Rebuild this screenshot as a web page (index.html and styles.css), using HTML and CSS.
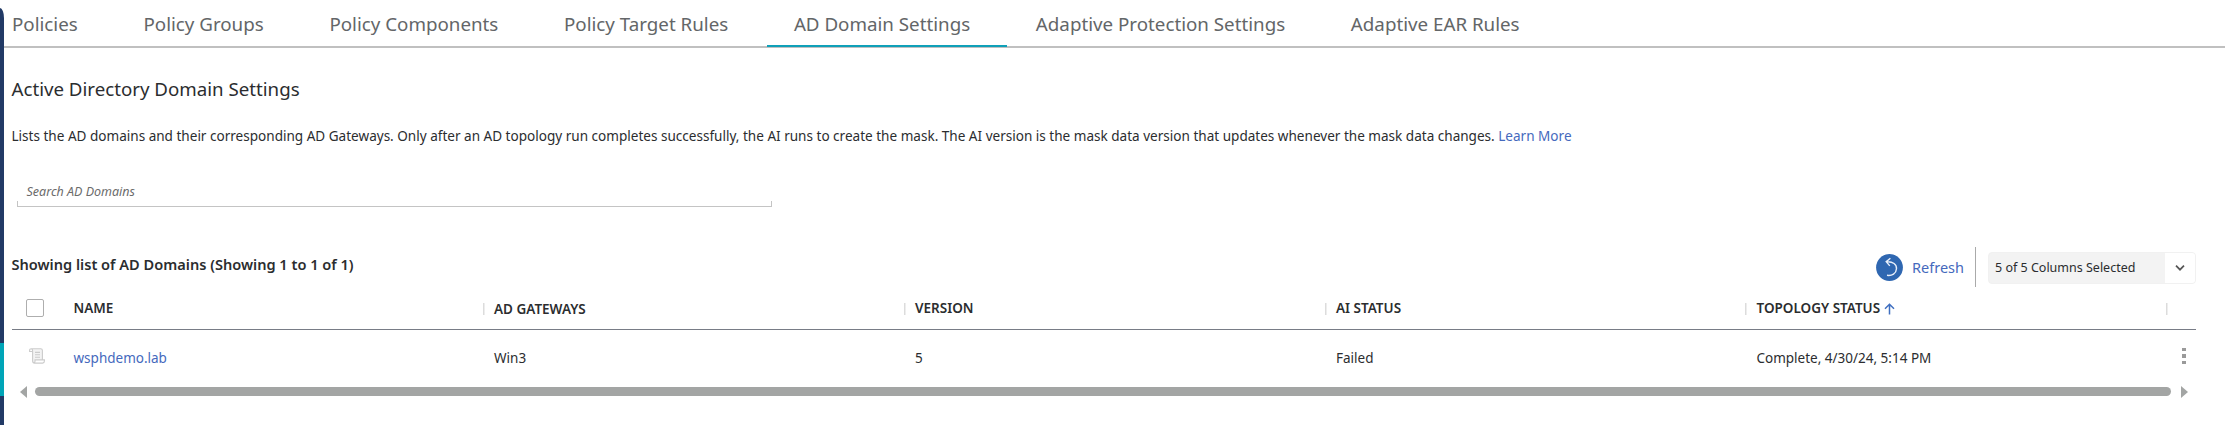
FILE: index.html
```html
<!DOCTYPE html>
<html lang="en">
<head>
<meta charset="utf-8">
<title>AD Domain Settings</title>
<link rel="stylesheet" href="styles.css">
</head>
<body>
<div class="app">
  <aside class="rail"><span class="rail-top"></span><span class="rail-active"></span><span class="rail-bottom"></span></aside>
  <main class="main">
    <nav class="tabs">
      <a class="tab">Policies</a>
      <a class="tab">Policy Groups</a>
      <a class="tab">Policy Components</a>
      <a class="tab">Policy Target Rules</a>
      <a class="tab tab-active">AD Domain Settings</a>
      <a class="tab">Adaptive Protection Settings</a>
      <a class="tab">Adaptive EAR Rules</a>
    </nav>
    <section class="content">
      <h1 class="title">Active Directory Domain Settings</h1>
      <p class="desc">Lists the AD domains and their corresponding AD Gateways. Only after an AD topology run completes successfully, the AI runs to create the mask. The AI version is the mask data version that updates whenever the mask data changes. <a class="link">Learn More</a></p>
      <div class="search"><span class="search-text">Search AD Domains</span><span class="search-edge"></span></div>
      <div class="toolbar">
        <h2 class="count">Showing list of AD Domains (Showing 1 to 1 of 1)</h2>
        <div class="actions">
          <svg class="refresh-icon" viewBox="0 0 27 27"><circle cx="13.5" cy="13.5" r="13.4" fill="#2f67b1"/><path d="M10.600 7.800C17 7.300 20.800 10.600 20.500 14.800C20.200 19.600 16 22 11 21.300M14.400 4.300l-4.200 3.400 3.600 4.200" fill="none" stroke="#e8effa" stroke-width="1.400"/></svg>
          <a class="refresh">Refresh</a>
          <span class="divider"></span>
          <div class="select"><span class="select-text">5 of 5 Columns Selected</span><span class="select-arrow"><svg width="10" height="8" viewBox="0 0 10 8"><path d="M1 1.700l4 4 4-4" fill="none" stroke="#555" stroke-width="1.700"/></svg></span></div>
        </div>
      </div>
      <div class="row head">
        <span class="check-cell"><span class="checkbox"></span></span>
        <span class="cell">NAME</span>
        <span class="cell sep low">AD GATEWAYS</span>
        <span class="cell sep">VERSION</span>
        <span class="cell sep">AI STATUS</span>
        <span class="cell sep">TOPOLOGY STATUS<svg class="sort" width="11" height="12" viewBox="0 0 11 12"><path d="M5.500 11.500V1.500M1 5.800l4.500-4.500 4.500 4.500" fill="none" stroke="#3f6fc0" stroke-width="1.500"/></svg></span>
        <span class="cell sep end"></span>
      </div>
      <div class="row body-row">
        <span class="check-cell"><svg class="doc" width="16" height="16" viewBox="0 0 16 16"><path d="M2.300.8h9.400q1.700 0 1.700 1.700v9.200H6v1.500q0 1.700-1.200 1.700t-1.200-2V3.500z" fill="#f3f3f3"/><path d="M2.300.8h9.400q1.700 0 1.700 1.700v9M2.300.8Q.6.8.6 2.500v1h3v9.600q0 2 2 2h8q1.800 0 1.800-2v-1.200H6v1.300q0 1.900-1.200 1.900M3.600 3.500q0-2.700-1.300-2.700M6 4.400h5M6 6.800h5M6 9.200h5" fill="none" stroke="#cbcbcb" stroke-width="1.100"/></svg></span>
        <span class="cell"><a class="link">wsphdemo.lab</a></span>
        <span class="cell">Win3</span>
        <span class="cell">5</span>
        <span class="cell">Failed</span>
        <span class="cell">Complete, 4/30/24, 5:14 PM</span>
        <span class="cell kebab"><i class="dot"></i><i class="dot"></i><i class="dot"></i></span>
      </div>
      <div class="scroll"><span class="arrow-left"></span><span class="thumb"></span><span class="arrow-right"></span></div>
    </section>
  </main>
</div>
</body>
</html>
```
FILE: styles.css
```css
* { box-sizing: border-box; }
body { margin: 0; background: #fff; font-family: "Noto Sans", sans-serif; color: #2b2d2f; }
.app { display: flex; width: 2225px; height: 425px; overflow: hidden; }
.rail { display: flex; flex-direction: column; flex: 0 0 4px; padding-top: 8px; }
.rail-top { flex: 0 0 335px; background: #223a66; border-top-right-radius: 4px 10px; }
.rail-active { flex: 0 0 53px; background: #00a5b8; }
.rail-bottom { flex: 1; background: #223a66; }
.main { flex: 1; min-width: 0; }
.tabs { display: flex; gap: 1.700px; height: 48px; border-bottom: 2px solid #c0c0c0; padding-left: 8px; }
.tab { height: 47px; padding: 0 37px 0 27px; line-height: 47px; font-size: 18.750px; color: #636668; white-space: nowrap; }
.tab:first-child { padding-left: 0; }
.tab-active { border-bottom: 2px solid #0fa0b8; }
.content { padding: 0 29px 0 7.500px; }
.title { margin: 28px 0 0; height: 26px; line-height: 26px; font-size: 18.700px; font-weight: 400; }
.desc { margin: 24px 0 0; height: 20px; line-height: 20px; font-size: 13.550px; white-space: nowrap; }
.link { color: #4569bd; }
.search { display: flex; flex-direction: column; justify-content: space-between; width: 755px; height: 24px; margin: 37px 0 0 5px; }
.search-text { padding-left: 10px; line-height: 18px; font-size: 12.500px; font-style: italic; color: #6b6b6b; }
.search-edge { height: 6px; border: 1px solid #c4c4c4; border-top: 0; }
.toolbar { display: flex; justify-content: space-between; height: 40px; margin-top: 40px; }
.count { margin: 5.500px 0 0; line-height: 22px; font-size: 14.580px; font-weight: 600; }
.actions { display: flex; align-items: center; }
.refresh-icon { width: 27px; height: 27px; }
.refresh { margin-left: 9px; line-height: 22px; font-size: 14.500px; color: #4569bd; }
.divider { width: 1.500px; height: 40px; margin: 0 12px 0 10.500px; background: #aaa; }
.select { display: flex; width: 208px; height: 32px; margin-top: 2px; border: 1px solid #f1f1f1; border-radius: 4px; background: #f3f3f3; overflow: hidden; }
.select-text { flex: 1; padding-left: 6px; line-height: 30px; font-size: 12.500px; }
.select-arrow { display: flex; align-items: center; justify-content: center; width: 30px; background: #fff; }
.row { display: grid; grid-template-columns: 62px 420.500px 421px 421px 420.500px 421px 1fr; }
.head { height: 42.500px; border-bottom: 1px solid #787c86; font-size: 13.500px; font-weight: 600; }
.check-cell { padding-left: 14.500px; }
.checkbox { display: block; width: 18px; height: 18px; margin-top: 12px; border: 1.500px solid #aeaeae; border-radius: 2px; }
.cell { white-space: nowrap; line-height: 20px; }
.head .cell { padding-top: 10.500px; }
.head .low { padding-top: 11.500px; }
.sep { background: linear-gradient(#dcdcdc, #dcdcdc) no-repeat 0 16px / 1.500px 12px; margin-left: -11.500px; padding-left: 11.500px; }
.sort { margin-left: 4px; vertical-align: -2px; }
.body-row { height: 56px; padding-top: 18px; font-size: 13.500px; }
.doc { display: block; margin-left: 2.500px; }
.kebab { display: flex; flex-direction: column; gap: 3px; padding-left: 4.500px; }
.dot { width: 3.500px; height: 3.500px; background: #9a9a9a; }
.scroll { display: flex; align-items: center; height: 12px; padding: 0 8.500px; }
.arrow-left, .arrow-right { border: 6px solid transparent; }
.arrow-left { border-left: 0; border-right: 7px solid #a3a5a4; }
.arrow-right { border-right: 0; border-left: 7px solid #a3a5a4; }
.thumb { flex: 1; height: 9.500px; margin: 0 10px 0 8px; border-radius: 5px; background: #a3a5a4; }
```
